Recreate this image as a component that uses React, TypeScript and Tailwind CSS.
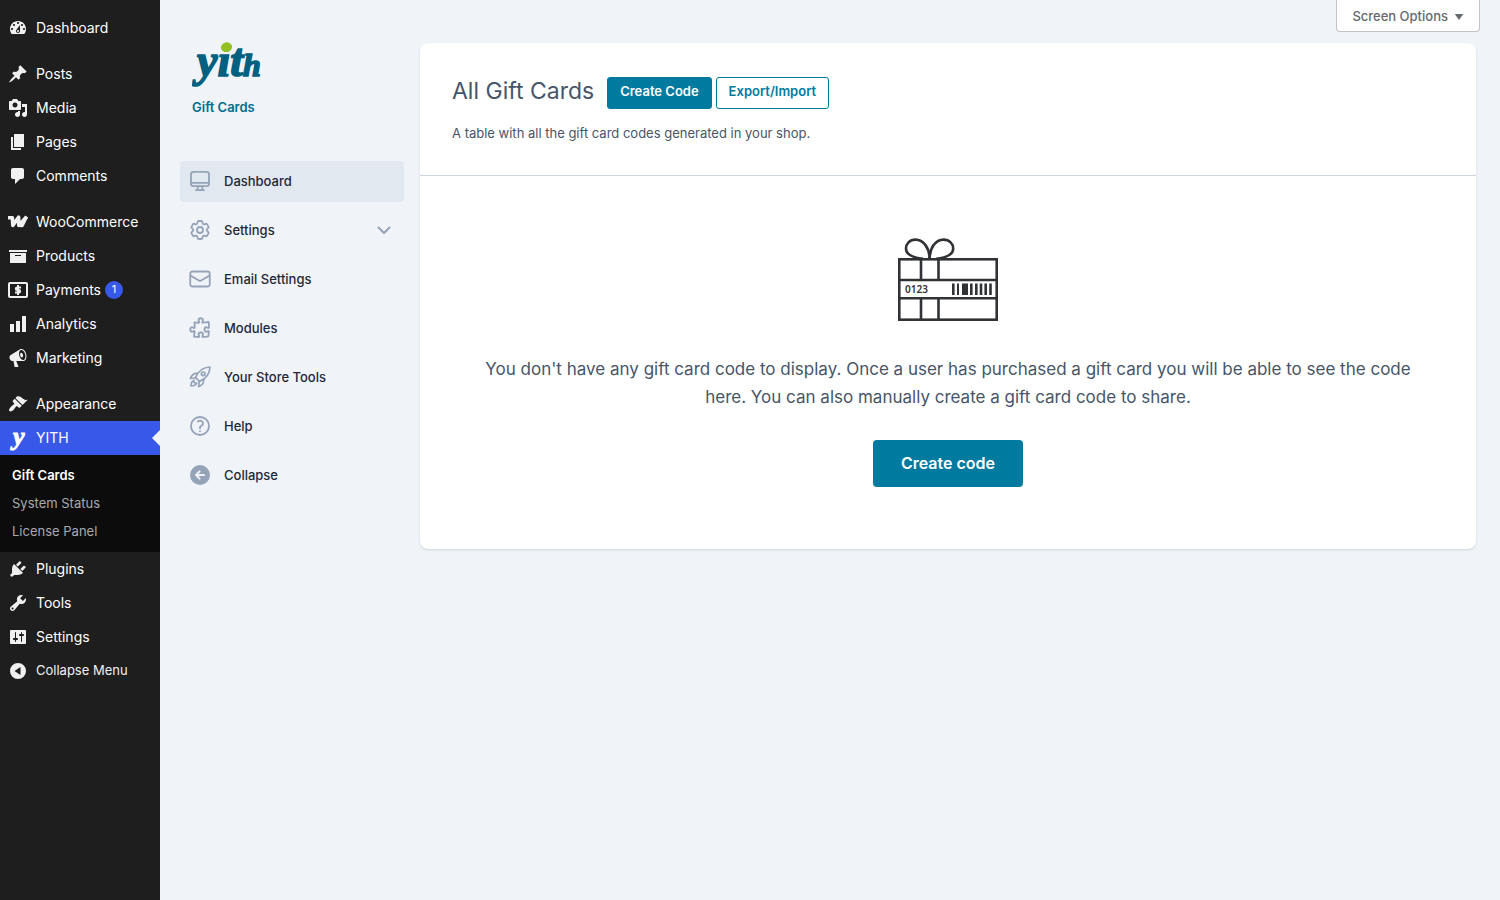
import type { ReactNode } from "react";
import { clsx } from "clsx";
import { HiOutlineCog6Tooth, HiOutlineEnvelope, HiOutlinePuzzlePiece, HiOutlineQuestionMarkCircle } from "react-icons/hi2";

type MenuItem = {
    label: string;
    icon: ReactNode;
    badge?: number;
};

type PanelItem = {
    label: string;
    icon: ReactNode;
    active?: boolean;
    expandable?: boolean;
};

function Glyph({ d }: { d: string }) {
    return (
        <svg viewBox="0 0 20 20" className="size-5 shrink-0" fill="currentColor" aria-hidden="true">
            <path fillRule="evenodd" d={d} />
        </svg>
    );
}

function WooIcon() {
    return (
        <svg viewBox="0 0 20 20" className="size-5 shrink-0" fill="none" stroke="currentColor" strokeWidth="3.6" strokeLinejoin="round" aria-hidden="true">
            <path d="M0 5.800h4.400L4.800 13.400 10.600 5.200l.2 8.200L18.600 4.600" />
            <path strokeWidth="3" d="M10.800 13.600l3.400.2L18.800 4.600" />
        </svg>
    );
}

function PaymentsIcon() {
    return (
        <svg viewBox="0 0 20 20" className="size-5 shrink-0" fill="none" stroke="currentColor" strokeWidth="2" aria-hidden="true">
            <rect x="1" y="3" width="18" height="14" rx="1" />
            <path d="M13 7.500H9.100a1.250 1.250 0 0 0 0 2.500h1.800a1.250 1.250 0 0 1 0 2.500H7M10 5v10" />
        </svg>
    );
}

function YithMark() {
    return (
        <svg viewBox="0 0 20 34" className="h-[34px] w-5 shrink-0" aria-hidden="true">
            <text x="5" y="24" fill="currentColor" stroke="currentColor" strokeWidth="1" fontFamily="Liberation Serif, serif" fontStyle="italic" fontWeight="700" fontSize="26">
                y
            </text>
        </svg>
    );
}

function YithLogo() {
    return (
        <svg viewBox="0 0 72 60" className="h-[60px] w-[72px]" role="img" aria-label="yith">
            <text x="5" y="47" fill="#006080" stroke="#006080" strokeWidth="1.600" fontFamily="Liberation Serif, serif" fontStyle="italic" fontWeight="700" fontSize="46">
                yit<tspan fontSize="32">h</tspan>
            </text>
            <ellipse cx="34.500" cy="18.200" rx="5.600" ry="4.800" fill="#94c11f" transform="rotate(-15 34.500 18.200)" />
        </svg>
    );
}

function DesktopIcon() {
    return (
        <svg viewBox="0 0 24 24" className="size-6" fill="none" stroke="currentColor" strokeWidth="1.800" strokeLinecap="round" strokeLinejoin="round" aria-hidden="true">
            <rect x="3" y="2.800" width="18" height="14.400" rx="2.400" />
            <path d="M3.200 13.800h17.600M10 17.400l-.6 3.400M14 17.400l.6 3.400M8 21.200h8" />
        </svg>
    );
}

function RocketIcon() {
    return (
        <svg viewBox="0 0 24 24" className="size-6" fill="none" stroke="currentColor" strokeWidth="1.700" strokeLinecap="round" strokeLinejoin="round" aria-hidden="true">
            <path d="M7.600 12.600C9.800 6.600 14.400 2.400 22 2c-.4 7.600-4.600 12.200-10.600 14.400z" />
            <circle cx="15.200" cy="8.800" r="1.800" />
            <path d="M9.600 8.400c-3.200-.4-5.800 1.200-7.200 5l3.400-.4 1.800-.4M15.600 14.400c.4 3.200-1.200 5.800-5 7.200l.4-3.400.4-1.800" />
            <path d="M6 15.200c-2 .8-3 3-3 5.800 2.800 0 5-1 5.800-3-.8.2-2 .2-2.600-.4s-.4-1.600-.2-2.400z" />
        </svg>
    );
}

function CollapseIcon() {
    return (
        <svg viewBox="0 0 24 24" className="size-6" aria-hidden="true">
            <circle cx="12" cy="12" r="10" fill="currentColor" />
            <path d="M16 12H8.500M11.600 8.400L8 12l3.600 3.600" fill="none" stroke="#f0f3f8" strokeWidth="2" strokeLinecap="round" strokeLinejoin="round" />
        </svg>
    );
}

function GiftCardArt() {
    return (
        <svg viewBox="0 0 100 84" className="h-[84px] w-[100px]" fill="none" stroke="#303236" strokeWidth="2.600" aria-hidden="true">
            <rect x="1.300" y="21.300" width="97.400" height="60.400" />
            <path d="M1.300 42h97.400M1.300 60.200h97.400M23 21v21M40.500 21v21M23 60v22M40.500 60v22" />
            <path d="M31.600 20.500C31.400 10 25.500 1.600 17.500 1.600 11.500 1.600 8 6 8 10.400c0 5.400 6 9.100 17 10.400" />
            <path d="M31.600 20.500C31.800 10 37.500 1.600 45.500 1.600 51.500 1.600 55.200 6 55.200 10.400c0 5.400-6 9.100-17 10.400" />
            <g fill="#303236" stroke="none">
                <rect x="54" y="45.500" width="2.600" height="11.500" />
                <rect x="59" y="45.500" width="2" height="11.500" />
                <rect x="64" y="45.500" width="6" height="11.500" />
                <rect x="72" y="45.500" width="2.600" height="11.500" />
                <rect x="77" y="45.500" width="2.600" height="11.500" />
                <rect x="81.700" y="45.500" width="2.600" height="11.500" />
                <rect x="86.400" y="45.500" width="2.600" height="11.500" />
                <rect x="91.200" y="45.500" width="2.600" height="11.500" />
                <text x="7" y="54.500" fontFamily="Noto Sans, sans-serif" fontWeight="600" fontSize="10">
                    0123
                </text>
            </g>
        </svg>
    );
}

const coreItems: MenuItem[][] = [
    [
        {
            label: "Dashboard",
            icon: (
                <Glyph d="M3.760 16h12.480c1.100-1.370 1.760-3.110 1.760-5 0-4.420-3.580-8-8-8s-8 3.580-8 8c0 1.890.66 3.630 1.760 5zM10 4c.55 0 1 .45 1 1s-.45 1-1 1-1-.45-1-1 .45-1 1-1zM6 6c.55 0 1 .45 1 1s-.45 1-1 1-1-.45-1-1 .45-1 1-1zm8 0c.55 0 1 .45 1 1s-.45 1-1 1-1-.45-1-1 .45-1 1-1zm-5.370 5.550L12 7v6c0 1.100-.9 2-2 2s-2-.9-2-2c0-.57.24-1.080.63-1.450zM4 10c.55 0 1 .45 1 1s-.45 1-1 1-1-.45-1-1 .45-1 1-1zm12 0c.55 0 1 .45 1 1s-.45 1-1 1-1-.45-1-1 .45-1 1-1zm-5 3c0-.55-.45-1-1-1s-1 .45-1 1 .45 1 1 1 1-.45 1-1z" />
            ),
        },
    ],
    [
        {
            label: "Posts",
            icon: (
                <Glyph d="M10.440 3.020l1.820-1.820 6.360 6.350-1.830 1.820c-1.050-.68-2.480-.57-3.410.36l-.75.75c-.92.93-1.040 2.350-.35 3.410l-1.830 1.820-2.410-2.410-2.800 2.790c-.42.42-3.380 2.710-3.800 2.290s1.860-3.390 2.280-3.810l2.790-2.790L4.100 9.360l1.830-1.820c1.050.69 2.480.57 3.400-.36l.75-.75c.93-.92 1.050-2.350.36-3.410z" />
            ),
        },
        {
            label: "Media",
            icon: (
                <Glyph d="M13 11V4c0-.55-.45-1-1-1h-1.670L9 1H5L3.670 3H2c-.55 0-1 .45-1 1v7c0 .55.45 1 1 1h10c.55 0 1-.45 1-1zM7 4.500c1.380 0 2.500 1.120 2.500 2.500S8.380 9.500 7 9.500 4.500 8.380 4.500 7 5.620 4.500 7 4.500zM14 6h5v10.500c0 1.380-1.120 2.500-2.500 2.500S14 17.880 14 16.500s1.120-2.500 2.500-2.500c.17 0 .34.02.5.05V9h-3V6zm-4 8.050V13h2v3.500c0 1.380-1.120 2.500-2.500 2.500S7 17.880 7 16.500 8.120 14 9.500 14c.17 0 .34.02.5.05z" />
            ),
        },
        { label: "Pages", icon: <Glyph d="M6 15V2h10v13H6zm-1 1h8v2H3V5h2v11z" /> },
        { label: "Comments", icon: <Glyph d="M5 2h9c1.100 0 2 .9 2 2v7c0 1.100-.9 2-2 2h-2l-5 5v-5H5c-1.100 0-2-.9-2-2V4c0-1.100.9-2 2-2z" /> },
    ],
    [
        { label: "WooCommerce", icon: <WooIcon /> },
        { label: "Products", icon: <Glyph d="M19 4v2H1V4h18zM2 7h16v10H2V7zm11 3V9H7v1h6z" /> },
        { label: "Payments", icon: <PaymentsIcon />, badge: 1 },
        { label: "Analytics", icon: <Glyph d="M18 18V2h-4v16h4zm-6 0V7H8v11h4zm-6 0v-8H2v8h4z" /> },
        {
            label: "Marketing",
            icon: (
                <Glyph d="M18.150 5.940c.46 1.620.38 3.220-.02 4.480-.42 1.280-1.260 2.180-2.300 2.480-.16.06-.26.06-.4.06-.06.02-.12.02-.18.02-.06.02-.14.02-.22.02h-6.800l2.220 5.500c.02.14-.06.26-.14.34-.08.1-.24.16-.34.16H6.950c-.1 0-.26-.06-.34-.16-.08-.08-.16-.2-.14-.34l-1-5.500H4.250l-.02-.02c-.5.06-1.080-.18-1.540-.62s-.88-1.080-1.060-1.880c-.24-.8-.2-1.560-.02-2.200.18-.62.58-1.080 1.060-1.300l.02-.02 9-5.400c.1-.06.18-.1.24-.16.06-.04.14-.08.24-.12.16-.08.28-.12.5-.18 1.040-.3 2.240.1 3.220.98s1.840 2.240 2.260 3.860zm-2.580 5.980h-.02c.4-.1.74-.34 1.040-.7.58-.7.86-1.760.86-3.040 0-.64-.1-1.300-.28-1.980-.34-1.360-1.020-2.500-1.780-3.240s-1.680-1.100-2.460-.88c-.82.22-1.400.96-1.700 2-.32 1.040-.28 2.360.06 3.720.38 1.360 1 2.500 1.800 3.240.78.74 1.620 1.100 2.480.88zm-2.540-7.080c.22-.04.42-.02.62.04.38.16.76.48 1.020 1s.42 1.200.42 1.780c0 .3-.04.56-.12.8-.18.48-.44.84-.86.94-.34.1-.8-.06-1.140-.4s-.64-.86-.78-1.500c-.18-.62-.12-1.240.02-1.720s.48-.84.82-.94z" />
            ),
        },
    ],
];

const appearance: MenuItem = {
    label: "Appearance",
    icon: (
        <Glyph d="M14.480 11.060L7.410 3.990l1.500-1.500c.5-.56 2.300-.47 3.510.32 1.210.8 1.430 1.280 2.910 2.100 1.180.64 2.450 1.260 4.450.85zm-.71.71L6.700 4.700 4.930 6.470c-.39.39-.39 1.020 0 1.410l1.060 1.060c.39.39.39 1.030 0 1.420-.6.6-1.430 1.110-2.210 1.690-.35.26-.7.53-1.010.84C1.430 14.230.4 16.080 1.400 17.070c.99 1 2.840-.03 4.180-1.360.31-.31.58-.66.85-1.020.57-.78 1.080-1.610 1.690-2.210.39-.39 1.020-.39 1.410 0l1.060 1.060c.39.39 1.020.39 1.410 0z" />
    ),
};

const systemItems: MenuItem[] = [
    {
        label: "Plugins",
        icon: (
            <Glyph d="M13.110 4.360L9.870 7.600 8 5.730l3.240-3.240c.35-.34 1.050-.2 1.560.32.52.51.66 1.210.31 1.550zm-8 1.770l.91-1.120 9.010 9.010-1.190.84c-.71.71-2.630 1.160-3.820 1.160H6.140L4.900 17.260c-.59.59-1.540.59-2.120 0-.59-.58-.59-1.530 0-2.120l1.240-1.240v-3.880c0-1.130.4-3.190 1.090-3.890zm7.260 3.970l3.240-3.240c.34-.35 1.040-.21 1.550.31.52.51.66 1.210.31 1.550l-3.240 3.250z" />
        ),
    },
    {
        label: "Tools",
        icon: (
            <Glyph d="M16.680 9.770c-1.340 1.340-3.300 1.670-4.950.99l-5.410 6.520c-.99.99-2.590.99-3.580 0s-.99-2.590 0-3.570l6.520-5.420c-.68-1.650-.35-3.610.99-4.950 1.280-1.280 3.120-1.620 4.720-1.060l-2.890 2.890 2.820 2.820 2.860-2.870c.53 1.580.18 3.390-1.080 4.650zM3.810 16.210c.4.39 1.040.39 1.430 0 .4-.4.4-1.040 0-1.430-.39-.4-1.030-.4-1.430 0-.39.39-.39 1.030 0 1.430z" />
        ),
    },
    {
        label: "Settings",
        icon: (
            <Glyph d="M18 16V4c0-.55-.45-1-1-1H3c-.55 0-1 .45-1 1v12c0 .55.45 1 1 1h14c.55 0 1-.45 1-1zM8 11h1c.55 0 1 .45 1 1s-.45 1-1 1H8v1.500c0 .28-.22.5-.5.5s-.5-.22-.5-.5V13H6c-.55 0-1-.45-1-1s.45-1 1-1h1V5.500c0-.28.22-.5.5-.5s.5.22.5.5V11zm5-2h-1c-.55 0-1-.45-1-1s.45-1 1-1h1V5.500c0-.28.22-.5.5-.5s.5.22.5.5V7h1c.55 0 1 .45 1 1s-.45 1-1 1h-1v5.500c0 .28-.22.5-.5.5s-.5-.22-.5-.5V9z" />
        ),
    },
];

const panelItems: PanelItem[] = [
    { label: "Dashboard", icon: <DesktopIcon />, active: true },
    { label: "Settings", icon: <HiOutlineCog6Tooth className="size-6" strokeWidth={1.8} />, expandable: true },
    { label: "Email Settings", icon: <HiOutlineEnvelope className="size-6" strokeWidth={1.8} /> },
    { label: "Modules", icon: <HiOutlinePuzzlePiece className="size-6" strokeWidth={1.8} /> },
    { label: "Your Store Tools", icon: <RocketIcon /> },
    { label: "Help", icon: <HiOutlineQuestionMarkCircle className="size-6" strokeWidth={1.8} /> },
    { label: "Collapse", icon: <CollapseIcon /> },
];

function MenuLink({ item }: { item: MenuItem }) {
    return (
        <li>
            <a href="#" className="flex h-[34px] items-center gap-2 px-2 text-sm text-white">
                <span className="text-[#f0f0f1]">{item.icon}</span>
                <span className="flex items-center gap-1">
                    {item.label}
                    {item.badge ? <span className="flex size-[18px] items-center justify-center rounded-full bg-[#3858e9] text-[11px]">{item.badge}</span> : null}
                </span>
            </a>
        </li>
    );
}

function AdminMenu() {
    return (
        <nav className="w-40 shrink-0 bg-[#1e1e1e] pt-[11px]" aria-label="Main menu">
            {coreItems.map((group) => (
                <ul key={group[0].label} className="mb-3">
                    {group.map((item) => (
                        <MenuLink key={item.label} item={item} />
                    ))}
                </ul>
            ))}
            <ul>
                <MenuLink item={appearance} />
                <li>
                    <a href="#" className="relative flex h-[34px] items-center gap-2 bg-[#3858e9] px-2 text-sm text-white">
                        <YithMark />
                        YITH
                        <span className="absolute top-1/2 right-0 -translate-y-1/2 border-8 border-l-0 border-transparent border-r-[#f0f3f8]" />
                    </a>
                    <ul className="bg-[#0c0c0c] px-3 pt-1.5 pb-[7px] text-[13px] leading-7 text-[#a9aaad]">
                        <li>
                            <a href="#" className="font-semibold text-white">
                                Gift Cards
                            </a>
                        </li>
                        <li>
                            <a href="#">System Status</a>
                        </li>
                        <li>
                            <a href="#">License Panel</a>
                        </li>
                    </ul>
                </li>
                {systemItems.map((item) => (
                    <MenuLink key={item.label} item={item} />
                ))}
            </ul>
            <button type="button" className="flex h-[34px] items-center gap-2 px-2 text-[13px] text-[#f0f0f1]">
                <Glyph d="M10 2a8 8 0 1 0 0 16 8 8 0 0 0 0-16zM12.500 6v8L6.500 10z" />
                Collapse Menu
            </button>
        </nav>
    );
}

function PanelNav() {
    return (
        <aside className="w-56 shrink-0 pt-[29px]">
            <div className="px-3">
                <YithLogo />
                <div className="mt-2 text-[13px] leading-5 font-semibold text-[#006e8f]">Gift Cards</div>
            </div>
            <nav className="mt-11 flex flex-col gap-2" aria-label="Gift Cards">
                {panelItems.map((item) => (
                    <a key={item.label} href="#" className={clsx("flex h-[41px] items-center gap-3 rounded px-2 text-[13px] font-medium text-[#1e293b]", item.active && "bg-[#e2e8f0]")}>
                        <span className="pb-px text-[#94a3b8]">{item.icon}</span>
                        {item.label}
                        {item.expandable ? (
                            <svg viewBox="0 0 24 24" className="ml-auto size-6 text-[#94a3b8]" fill="none" stroke="currentColor" strokeWidth="2" strokeLinecap="round" strokeLinejoin="round" aria-hidden="true">
                                <path d="M6.500 8.500L12 14l5.500-5.500" />
                            </svg>
                        ) : null}
                    </a>
                ))}
            </nav>
        </aside>
    );
}

export default function App() {
    return (
        <div className="flex min-h-screen bg-[#f0f3f8] font-['Inter',sans-serif]">
            <AdminMenu />
            <div className="flex min-w-0 flex-1 gap-4 pl-5">
                <PanelNav />
                <main className="min-w-0 flex-1 pr-6">
                    <div className="-mr-1 flex justify-end">
                        <button type="button" className="flex h-8 items-center gap-1.5 rounded-b border border-t-0 border-[#c3c4c7] bg-white px-[15px] pt-0.5 text-[13px] font-medium text-[#646970]">
                            Screen Options
                            <svg viewBox="0 0 10 10" className="size-2.5" fill="currentColor" aria-hidden="true">
                                <path d="M.8 2h8.400L5 8z" />
                            </svg>
                        </button>
                    </div>
                    <section className="mt-[11px] rounded-lg bg-white text-[#475569] shadow-sm">
                        <header className="border-b border-[#cbd5e1] px-8 pt-[34px] pb-8">
                            <div className="flex items-start gap-[13px]">
                                <h1 className="text-[23px] leading-7">All Gift Cards</h1>
                                <div className="flex gap-1 text-[13px] leading-[26px] font-semibold">
                                    <button type="button" className="rounded-[3px] border border-[#007a9f] bg-[#007a9f] px-3 pb-1 text-white">
                                        Create Code
                                    </button>
                                    <button type="button" className="rounded-[3px] border border-[#007a9f] bg-white px-3 pb-1 text-[#007a9f]">
                                        Export/Import
                                    </button>
                                </div>
                            </div>
                            <p className="mt-3.5 text-[13px] leading-5">A table with all the gift card codes generated in your shop.</p>
                        </header>
                        <div className="flex flex-col items-center px-14 pt-[62px] pb-[62px]">
                            <GiftCardArt />
                            <p className="mt-[33px] text-center text-[17px] leading-7">
                                You don't have any gift card code to display. Once a user has purchased a gift card you will be able to see the code here. You can also manually create a gift card code to share.
                            </p>
                            <button type="button" className="mt-[29px] h-[47px] rounded bg-[#007a9f] px-7 pb-0.5 text-base font-semibold text-white">
                                Create code
                            </button>
                        </div>
                    </section>
                </main>
            </div>
        </div>
    );
}
